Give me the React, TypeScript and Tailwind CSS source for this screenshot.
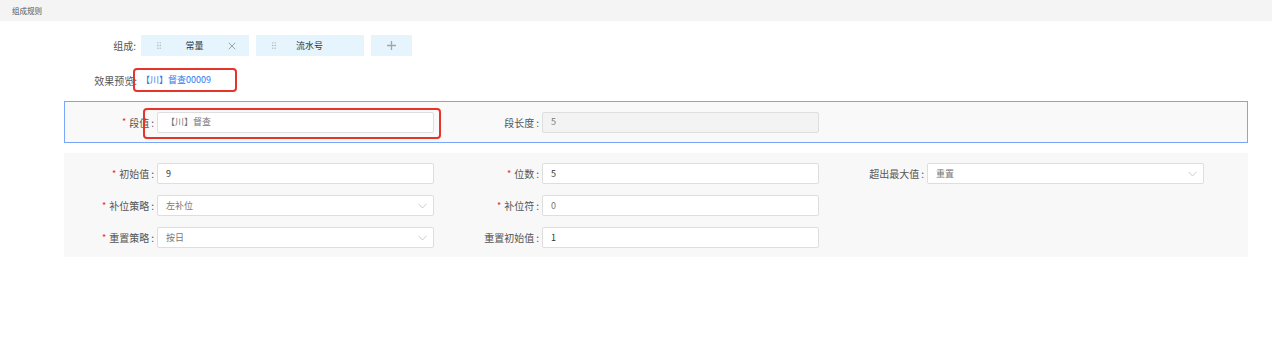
import React from "react";

const font = { fontFamily: '"Noto Sans CJK SC", "Noto Sans", sans-serif' };

function Chevron() {
  return (
    <svg width="9" height="6" viewBox="0 0 9 6" className="shrink-0">
      <path d="M0.5 0.8 L4.5 5 L8.5 0.8" fill="none" stroke="#c6c6c6" strokeWidth="0.9" />
    </svg>
  );
}

function Handle() {
  return (
    <svg width="4" height="7" viewBox="0 0 4 7">
      {[0, 1, 2].map((r) =>
        [0, 1].map((c) => <circle key={`${r}-${c}`} cx={0.8 + c * 2.4} cy={0.8 + r * 2.7} r="0.65" fill="#a8a8a8" />)
      )}
    </svg>
  );
}

function Label({ text, req, w }: { text: string; req?: boolean; w: string }) {
  return (
    <div className={`${w} shrink-0 flex items-center justify-end pr-[3px] text-[10px] text-[#555]`}>
      {req && <span className="text-[#f5222d] mr-[3px] text-[9px]">*</span>}
      <span>{text}</span>
      <span className="ml-[2px]">:</span>
    </div>
  );
}

function Input({ value, dim, disabled, select }: { value: string; dim?: boolean; disabled?: boolean; select?: boolean }) {
  return (
    <div
      className={`w-[277px] h-[21px] shrink-0 rounded-[2px] border border-[#dedede] flex items-center justify-between pl-[8px] pr-[6px] text-[9px] ${
        disabled ? "bg-[#f3f3f3]" : "bg-white"
      } ${dim ? "text-[#777]" : "text-[#333]"}`}
    >
      <span>{value}</span>
      {select && <Chevron />}
    </div>
  );
}

function Field({ label, req, value, dim, disabled, select, lw, cw }: any) {
  return (
    <div className={`${cw} shrink-0 flex items-center`}>
      <Label text={label} req={req} w={lw} />
      <Input value={value} dim={dim} disabled={disabled} select={select} />
    </div>
  );
}

export default function App() {
  return (
    <div className="w-[1280px] h-[343px] bg-white relative overflow-hidden" style={font}>
      <div className="w-[1272px] h-[21px] bg-[#f4f4f4] flex items-center pl-[12px] text-[7.5px] text-[#555]">组成规则</div>

      <div className="mt-[14px] flex items-center h-[21px]">
        <div className="w-[137px] shrink-0 text-right text-[10px] text-[#555] pr-[1px]">组成:</div>
        <div className="ml-[4px] flex gap-[7px]">
          <div className="w-[108px] h-[21px] bg-[#e5f4fd] flex items-center pl-[16px] pr-[13px]">
            <Handle />
            <span className="flex-1 text-center text-[9px] text-[#333]">常量</span>
            <svg width="8" height="8" viewBox="0 0 8 8">
              <path d="M0.8 0.8 L7.2 7.2 M7.2 0.8 L0.8 7.2" stroke="#999" strokeWidth="0.9" />
            </svg>
          </div>
          <div className="w-[108px] h-[21px] bg-[#e5f4fd] flex items-center pl-[16px] pr-[21px]">
            <Handle />
            <span className="flex-1 text-center text-[9px] text-[#333]">流水号</span>
          </div>
          <div className="w-[41px] h-[21px] bg-[#e5f4fd] flex items-center justify-center">
            <svg width="9" height="9" viewBox="0 0 9 9">
              <path d="M4.5 0 V9 M0 4.5 H9" stroke="#a5a5a5" strokeWidth="1.3" />
            </svg>
          </div>
        </div>
      </div>

      <div className="mt-[13px] flex items-center h-[22px]">
        <div className="w-[137px] shrink-0 text-right text-[10px] text-[#555]">效果预览:</div>
        <div className="ml-[4px] text-[9px] text-[#2f7bf0]">【川】督查00009</div>
      </div>

      <div className="mt-[10px] ml-[64px] w-[1184px] h-[42px] border border-[#79a6f8] bg-[#f9f9f9] flex items-center">
        <Field label="段值" req value="【川】督查" dim lw="w-[92px]" cw="w-[369px]" />
        <Field label="段长度" value="5" dim disabled lw="w-[108px]" cw="w-[385px]" />
      </div>

      <div className="mt-[10px] ml-[64px] w-[1184px] bg-[#f8f8f8] pt-[10px] pb-[9px] flex flex-col gap-[11px]">
        <div className="flex items-center">
          <Field label="初始值" req value="9" lw="w-[93px]" cw="w-[370px]" />
          <Field label="位数" req value="5" lw="w-[108px]" cw="w-[384px]" />
          <Field label="超出最大值" value="重置" dim select lw="w-[109px]" cw="w-[386px]" />
        </div>
        <div className="flex items-center">
          <Field label="补位策略" req value="左补位" dim select lw="w-[93px]" cw="w-[370px]" />
          <Field label="补位符" req value="0" dim lw="w-[108px]" cw="w-[384px]" />
        </div>
        <div className="flex items-center">
          <Field label="重置策略" req value="按日" dim select lw="w-[93px]" cw="w-[370px]" />
          <Field label="重置初始值" value="1" lw="w-[108px]" cw="w-[384px]" />
        </div>
      </div>

      <div className="absolute left-[133px] top-[68px] w-[104px] h-[24px] border-2 border-[#e5352b] rounded-[4px]" />
      <div className="absolute left-[143px] top-[108px] w-[298px] h-[31px] border-2 border-[#e5352b] rounded-[4px]" />
    </div>
  );
}
